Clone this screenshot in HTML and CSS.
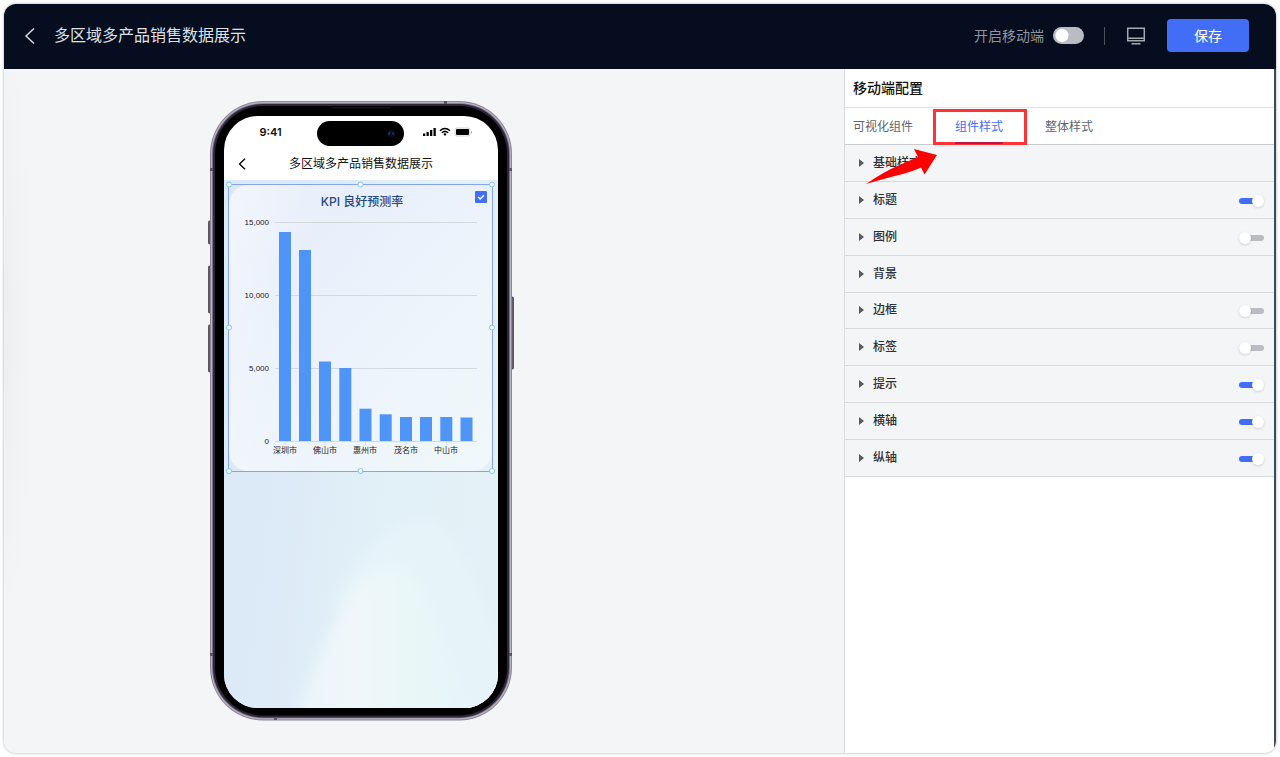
FILE: index.html
```html
<!DOCTYPE html>
<html lang="zh-CN">
<head>
<meta charset="utf-8">
<meta name="viewport" content="width=device-width, initial-scale=1">
<title>多区域多产品销售数据展示</title>
<link rel="stylesheet" href="styles.css">
</head>
<body>
<div class="window">
  <header class="topbar">
    <button class="icon-btn" aria-label="返回">
      <svg width="12" height="18" viewBox="0 0 12 18"><path d="M10 1.5 2 9l8 7.5" fill="none" stroke="#d5d8de" stroke-width="1.5"/></svg>
    </button>
    <h1 class="topbar-title">多区域多产品销售数据展示</h1>
    <div class="topbar-actions">
      <label class="mobile-label" for="mobile-on">开启移动端</label>
      <input class="switch" id="mobile-on" type="checkbox">
      <span class="divider"></span>
      <button class="icon-btn" aria-label="桌面端">
        <svg width="20" height="18" viewBox="0 0 20 18" fill="none" stroke="#a3a8b1" stroke-width="1.5"><path d="M1.7 1.2h16.6v12.6H1.7zM1.7 11.2h16.6M5.5 16.7h9"/></svg>
      </button>
      <button class="save">保存</button>
    </div>
  </header>

  <div class="workspace">
    <main class="canvas">
      <div class="phone">
        <svg class="shell" viewBox="0 0 306 620" aria-hidden="true">
          <g fill="#615a70" stroke="#393345" stroke-width=".7">
            <rect x=".5" y="120" width="4" height="23" rx="1"/>
            <rect x=".5" y="165" width="4" height="47" rx="1"/>
            <rect x=".5" y="224" width="4" height="47" rx="1"/>
            <rect x="301.500" y="196" width="4" height="72" rx="1"/>
          </g>
          <rect x="2" y="0" width="302" height="619.500" rx="53" fill="#8d8598"/>
          <rect x="3" y="1" width="300" height="617.500" rx="52" fill="#b9b2c1"/>
          <rect x="4" y="2.200" width="298" height="615" rx="51" fill="#787083"/>
          <rect x="5" y="3" width="296" height="613.500" rx="50" fill="#2c273a"/>
          <rect x="7" y="5" width="292" height="609.500" rx="48" fill="#000"/>
          <path d="M123 5.800q1 1 3 1h54q2 0 3-1" fill="none" stroke="#292630" stroke-width=".8"/>
          <path d="M2 67h3v3H2zM301 67h3v3h-3zM2 552h3v3H2zM301 552h3v3h-3zM236 0h3v3h-3zM66 616h3v3h-3z" fill="#5b5369"/>
        </svg>
        <div class="screen">
          <div class="status">
            <span class="clock">9:41</span>
            <svg class="island" width="88" height="26" viewBox="0 0 88 26" aria-hidden="true"><rect width="87" height="25" rx="12.500"/><circle cx="74" cy="12.500" r="4" fill="#080c18"/><path d="M72 14v-2l1.300-1M75 11.500l1.300 1v1.500" stroke="#1b509b" fill="none"/></svg>
            <svg class="signals" width="50" height="12" viewBox="0 0 50 12" aria-hidden="true">
              <path d="M1 7.500h2.300V10H1zM4.500 6h2.300v4H4.500zM8 4h2.300v6H8zM11.500 2h2.300v8h-2.300z"/>
              <g fill="none" stroke="#000" stroke-width="1.500"><path d="M18 4.700q5-4.500 10 0M19.900 6.700q3.100-2.700 6.200 0"/></g>
              <path d="m21.300 8 1.700 2 1.700-2q-1.700-1.300-3.400 0z"/>
              <rect x="33" y="2" width="15" height="8" rx="2" fill="#fff" stroke="#bbb" stroke-width=".7"/><rect x="34" y="3" width="13" height="6" rx="1"/><path d="M49 5v2.500q1-.5 1-1.200T49 5z" fill="#999"/>
            </svg>
          </div>
          <div class="app-head">
            <button class="icon-btn" aria-label="返回上一页"><svg width="8" height="12" viewBox="0 0 8 12"><path d="M7 .7 1.500 6 7 11.300" fill="none" stroke="#000" stroke-width="1.300"/></svg></button>
            <h2 class="app-title">多区域多产品销售数据展示</h2>
          </div>
          <div class="app-body">
            <svg class="backdrop" viewBox="0 0 274 527" preserveAspectRatio="none" aria-hidden="true">
              <defs>
                <linearGradient id="sky" x1="0" x2="1" y1=".3" y2=".55"><stop offset=".2" stop-color="#dce9f7"/><stop offset=".65" stop-color="#e2f1f7"/><stop offset="1" stop-color="#e4f2f8"/></linearGradient>
                <linearGradient id="beam" x1="0" x2="1"><stop stop-color="#e8f5f9"/><stop offset=".3" stop-color="#f0f7fa"/><stop offset=".65" stop-color="#e8f7f7"/><stop offset="1" stop-color="#e6f4fa"/></linearGradient>
                <filter id="soft" x="-20%" y="-20%" width="140%" height="140%"><feGaussianBlur stdDeviation="6"/></filter>
              </defs>
              <rect width="274" height="527" fill="url(#sky)"/>
              <path d="M110 420Q160 330 210 340 260 380 290 550H180z" fill="#e6f4fa" filter="url(#soft)"/>
              <path d="M68 550Q120 385 172 384 196 388 215 450L255 550z" fill="url(#beam)" filter="url(#soft)"/>
            </svg>
            <section class="widget">
              <svg class="chart" viewBox="0 0 265 288" role="img" aria-label="KPI 良好预测率">
                <defs><linearGradient id="card" x1="0" x2="1" y1="0" y2="1"><stop stop-color="#edf2fb"/><stop offset=".25" stop-color="#e8effb"/><stop offset=".6" stop-color="#edf4fb"/><stop offset="1" stop-color="#f0f8fa"/></linearGradient><linearGradient id="haze"><stop stop-color="#fff" stop-opacity=".3"/><stop offset=".3" stop-color="#fff" stop-opacity="0"/></linearGradient></defs>
                <rect x="1" y="1" width="263" height="286" rx="20" fill="url(#card)"/>
                <rect x="1" y="1" width="263" height="286" rx="20" fill="url(#haze)"/>
                <text class="chart-title" x="134" y="22">KPI 良好预测率</text>
                <path d="M47 38.500h202M47 111.500h202M47 184.500h202M47 257.500h202M57 258v3M97 258v3M137.500 258v3M178 258v3M218.500 258v3" fill="none" stroke="#d5d8dc"/>
                <g class="tick-y"><text x="41" y="41">15,000</text><text x="41" y="114">10,000</text><text x="41" y="187">5,000</text><text x="41" y="260">0</text></g>
                <g fill="#4f95f8">
                  <rect x="51" y="48" width="12" height="209"/><rect x="71" y="66" width="12" height="191"/>
                  <rect x="91" y="177.500" width="12" height="79.500"/><rect x="111.300" y="184" width="12" height="73"/>
                  <rect x="131.500" y="224.700" width="12" height="32.300"/><rect x="151.700" y="230.300" width="12" height="26.700"/>
                  <rect x="172" y="233" width="12" height="24"/><rect x="192" y="233" width="12" height="24"/>
                  <rect x="212.300" y="233" width="12" height="24"/><rect x="232.500" y="233.500" width="12" height="23.500"/>
                </g>
                <g class="tick-x"><text x="57" y="269">深圳市</text><text x="97" y="269">佛山市</text><text x="137" y="269">惠州市</text><text x="178" y="269">茂名市</text><text x="218" y="269">中山市</text></g>
                <rect x=".5" y=".5" width="264" height="287" fill="none" stroke="#86a2f6"/>
                <g class="handles"><circle cx="1" cy=".5" r="2.500"/><circle cx="132.500" cy=".5" r="2.500"/><circle cx="264" cy=".5" r="2.500"/><circle cx="1" cy="143.500" r="2.500"/><circle cx="264" cy="143.500" r="2.500"/><circle cx="1" cy="287" r="2.500"/><circle cx="132.500" cy="287" r="2.500"/><circle cx="264" cy="287" r="2.500"/></g>
              </svg>
              <span class="pick"><input type="checkbox" checked aria-label="选择组件"><svg width="12" height="12" viewBox="0 0 12 12" aria-hidden="true"><path d="m3.200 6 2 2 3.700-3.700" fill="none" stroke="#fff" stroke-width="1.500"/></svg></span>
            </section>
          </div>
        </div>
      </div>
    </main>

    <aside class="panel">
      <h2 class="panel-title">移动端配置</h2>
      <nav class="tabs">
        <button class="tab">可视化组件</button>
        <button class="tab active">组件样式<span class="mark"></span></button>
        <button class="tab">整体样式</button>
        <svg class="arrow" width="72" height="38" viewBox="0 0 72 38" aria-hidden="true"><path d="M0 36Q17 24 34 16.700L52 9 48 1 71 7 58.500 26.500 55 19.500Q45 24 31 27.500T0 36z" fill="#f00"/></svg>
      </nav>
      <ul class="groups">
        <li class="group"><button class="fold">基础样式</button></li>
        <li class="group"><button class="fold" id="g1">标题</button><input class="slim" type="checkbox" aria-labelledby="g1" checked></li>
        <li class="group"><button class="fold" id="g2">图例</button><input class="slim" type="checkbox" aria-labelledby="g2"></li>
        <li class="group"><button class="fold">背景</button></li>
        <li class="group"><button class="fold" id="g4">边框</button><input class="slim" type="checkbox" aria-labelledby="g4"></li>
        <li class="group"><button class="fold" id="g5">标签</button><input class="slim" type="checkbox" aria-labelledby="g5"></li>
        <li class="group"><button class="fold" id="g6">提示</button><input class="slim" type="checkbox" aria-labelledby="g6" checked></li>
        <li class="group"><button class="fold" id="g7">横轴</button><input class="slim" type="checkbox" aria-labelledby="g7" checked></li>
        <li class="group"><button class="fold" id="g8">纵轴</button><input class="slim" type="checkbox" aria-labelledby="g8" checked></li>
      </ul>
    </aside>
  </div>
</div>
</body>
</html>
```
FILE: styles.css
```css
* { box-sizing: border-box; }

body {
  margin: 0;
  padding: 4px;
  background: #fff;
  color: #2b2f36;
  font: 12px/20px "Liberation Sans", "Noto Sans CJK SC", sans-serif;
}

button {
  padding: 0;
  border: 0;
  background: none;
  color: inherit;
  font: inherit;
  cursor: pointer;
}

input { margin: 0; }
h1, h2 { margin: 0; font-weight: 400; }

.window {
  display: flex;
  flex-direction: column;
  min-height: calc(100vh - 8px);
  border-radius: 12px;
  overflow: hidden;
  box-shadow: 0 0 3px rgba(0, 0, 0, .35);
}

/* Top bar */
.topbar {
  display: flex;
  align-items: center;
  height: 65px;
  padding: 0 27px 2px 20px;
  background: #060d1e;
}

.icon-btn { display: flex; }

.topbar-title {
  margin-left: 18px;
  color: #dfe1e6;
  font-size: 16px;
  line-height: 24px;
}

.topbar-actions {
  display: flex;
  align-items: center;
  margin-left: auto;
}

.mobile-label { color: #8f949e; font-size: 14px; }

.switch {
  width: 31px;
  height: 17px;
  margin-left: 9px;
  border-radius: 9px;
  appearance: none;
  background: radial-gradient(circle at 9px 50%, #fff 6px, #b9bcc2 7px);
}

.divider {
  width: 1px;
  height: 18px;
  margin: 0 21px 0 20px;
  background: #4b505c;
}

.save {
  width: 82px;
  height: 33px;
  margin-left: 21px;
  border-radius: 4px;
  background: #426ef7;
  color: #fff;
  font-size: 14px;
}

.workspace { display: flex; flex: 1; }

.canvas {
  flex: 1;
  padding: 32px 16px 32px 204px;
  background: radial-gradient(ellipse 28px 300px at 0 260px, #eceef0, #f4f5f7);
}

/* Phone */
.phone {
  position: relative;
  width: 306px;
  padding: 15px 16px 13px;
}

.shell {
  position: absolute;
  inset: 0;
  width: 100%;
  height: 100%;
}

.screen {
  position: relative;
  display: flex;
  flex-direction: column;
  height: 592px;
  border-radius: 34px;
  background: #fff;
  overflow: hidden;
}

.status {
  display: grid;
  grid-template-columns: 1fr 88px 1fr;
  align-items: center;
  height: 32px;
  padding-top: 4px;
}

.clock {
  margin-bottom: 4px;
  color: #111;
  font: 600 11px/20px Inter, sans-serif;
  text-align: center;
}

.signals { margin: 0 0 4px 17px; }

.app-head {
  display: flex;
  align-items: center;
  height: 32px;
  padding: 0 14px;
}

.app-title {
  flex: 1;
  padding-right: 8px;
  color: #111;
  font-size: 12px;
  text-align: center;
}

.app-body {
  position: relative;
  flex: 1;
  padding: 4px 5px 4px 4px;
}

.backdrop {
  position: absolute;
  inset: 0;
  width: 100%;
  height: 100%;
}

.widget { position: relative; }
.chart { display: block; width: 100%; overflow: visible; }

.chart-title {
  fill: #254987;
  font-family: Inter, "Noto Sans CJK SC", sans-serif;
  font-size: 12px;
  font-weight: 500;
  text-anchor: middle;
}

.tick-y { fill: #222; font-size: 8px; text-anchor: end; }
.tick-x { fill: #222; font-size: 8px; text-anchor: middle; }
.handles { fill: #fff; stroke: #79c6f4; stroke-width: 1px; }

.pick {
  position: absolute;
  top: 7px;
  right: 6px;
  display: grid;
}

.pick input, .pick svg { grid-area: 1 / 1; }

.pick input {
  width: 12px;
  height: 12px;
  border-radius: 1px;
  appearance: none;
  background: #426ef7;
}

.pick svg { z-index: 1; pointer-events: none; }

/* Settings panel */
.panel {
  flex: 0 0 432px;
  border-right: 2px solid #3c4d58;
  border-left: 1px solid #d9dbde;
  background: #fff;
}

.panel-title {
  height: 39px;
  padding-left: 8px;
  border-bottom: 1px solid #dfe1e4;
  color: #111;
  font-size: 14px;
  font-weight: 500;
  line-height: 38px;
}

.tabs {
  position: relative;
  display: flex;
  gap: 42px;
  height: 37px;
  padding-left: 8px;
  border-bottom: 1px solid #c9cbcf;
  color: #60656e;
}

.tab { position: relative; padding-top: 2px; }
.tab.active { color: #426ef7; }

.tab.active::after {
  content: "";
  position: absolute;
  z-index: 1;
  inset: auto 0 0;
  height: 2px;
  background: #be1743;
}

.mark {
  position: absolute;
  inset: 1px -24px -1px -22px;
  border: 3px solid #ff3336;
}

.arrow {
  position: absolute;
  z-index: 1;
  top: 40px;
  left: 21px;
}

.groups {
  display: grid;
  grid-auto-rows: 1fr;
  height: 332px;
  margin: 0;
  padding: 0;
  list-style: none;
}

.group {
  display: flex;
  align-items: center;
  padding-right: 10px;
  border-bottom: 1px solid #d8dadd;
  background: #f4f5f7;
}

.fold {
  display: flex;
  flex: 1;
  align-items: center;
  gap: 9px;
  padding-left: 14px;
  font-weight: 500;
}

.fold::before {
  content: "";
  border: 4px solid transparent;
  border-right-width: 0;
  border-left: 5px solid #555b65;
}

.slim {
  position: relative;
  display: flex;
  align-items: center;
  width: 25px;
  height: 12px;
  margin-top: 2px;
  appearance: none;
}

.slim::after {
  content: "";
  position: absolute;
  inset: 3px 0;
  border-radius: 3px;
  background: #b9bcc2;
}

.slim::before {
  content: "";
  z-index: 1;
  width: 12px;
  height: 12px;
  border-radius: 50%;
  background: #fff;
  box-shadow: 0 1px 3px rgba(0, 0, 0, .15);
}

.slim:checked { justify-content: flex-end; }
.slim:checked::after { right: 4px; background: #426ef7; }
```
